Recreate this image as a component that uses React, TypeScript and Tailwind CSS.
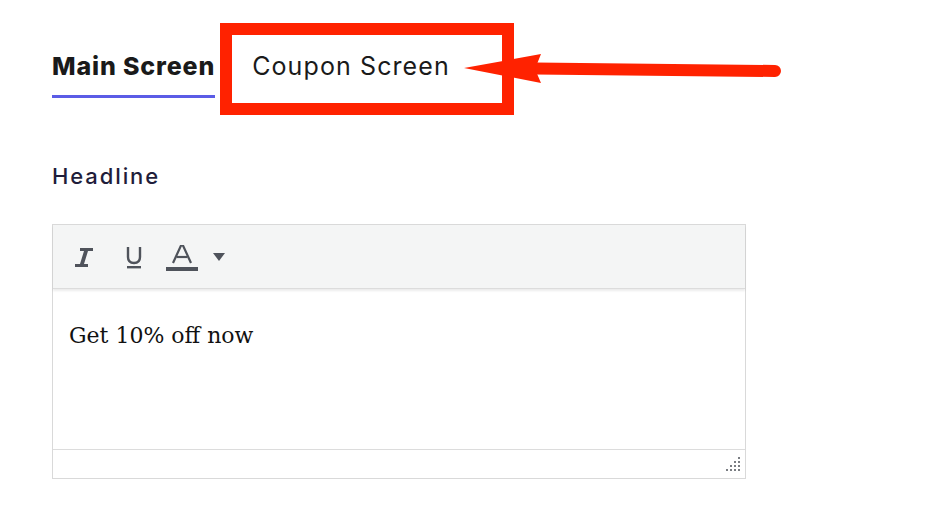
import React from 'react';

// toolbar glyphs drawn to match the editor's icon set
const ItalicIcon = () => (
  <svg width="20" height="22" viewBox="0 0 20 22" className="block">
    <path d="M5 1h13v3h-5l-4 13h4v3H0v-3h5l4-13H5z" fill="#4f535b" />
  </svg>
);

const UnderlineIcon = () => (
  <svg width="18" height="24" viewBox="0 0 18 24" className="block">
    <path d="M3 1v10c0 4 2.5 6 6 6s6-2 6-6V1" fill="none" stroke="#4f535b" strokeWidth="2.4" />
    <rect x="2" y="20" width="14" height="2.4" fill="#4f535b" />
  </svg>
);

const ColorIcon = () => (
  <svg width="32" height="26" viewBox="0 0 32 26" className="block">
    <path d="M7 18L15 0.5h2L25 18" fill="none" stroke="#4f535b" strokeWidth="2.2" />
    <path d="M10.5 12h11" stroke="#4f535b" strokeWidth="2.2" />
    <rect x="0" y="22" width="32" height="4" fill="#4f535b" />
  </svg>
);

const Caret = () => (
  <svg width="12" height="9" viewBox="0 0 12 9" className="block">
    <path d="M0 0h12L6 8z" fill="#4f535b" />
  </svg>
);

const ResizeGrip = () => {
  const dots: [number, number][] = [];
  for (let r = 0; r < 4; r++) {
    for (let c = 3 - r; c < 4; c++) dots.push([c * 4, r * 4]);
  }
  return (
    <svg width="15" height="15" viewBox="0 0 15 15" className="block">
      {dots.map(([x, y]) => (
        <rect key={`${x}-${y}`} x={x} y={y} width="2" height="2" fill="#7a7d82" />
      ))}
    </svg>
  );
};

export default function App() {
  return (
    <div className="relative w-[938px] h-[526px] bg-white overflow-hidden pl-[52px] pt-[50px] font-['Inter',sans-serif]">
      {/* tabs */}
      <div className="flex items-start gap-[37px]">
        <div className="border-b-[3px] border-[#5b5ce6] pb-[13px]">
          <span className="block whitespace-nowrap text-[25px] leading-8 font-extrabold tracking-[0.85px] text-[#1a1a1a]">Main Screen</span>
        </div>
        <span className="block whitespace-nowrap text-[25px] leading-8 font-normal tracking-[1.1px] text-[#1a1a1a]">Coupon Screen</span>
      </div>

      {/* headline label */}
      <h3 className="mt-[64px] text-[22px] leading-7 font-medium tracking-[1.9px] text-[#1f1d3a]">Headline</h3>

      {/* editor */}
      <div className="mt-[34px] w-[694px] h-[255px] border border-[#d9d9d9] flex flex-col">
        <div className="h-[64px] bg-[#f4f5f5] border-b border-[#dcdcdc] shadow-[0_2px_2px_rgba(0,0,0,0.08)] flex items-center pl-[22px] relative z-10">
          <div className="pt-[2px]"><ItalicIcon /></div>
          <div className="ml-[30px] pt-[2px]"><UnderlineIcon /></div>
          <div className="ml-[23px] pt-[2px]"><ColorIcon /></div>
          <div className="ml-[15px] pt-[2px]"><Caret /></div>
        </div>
        <div className="flex-1 px-[16px] pt-[33px] font-['DejaVu_Serif',serif] text-[22px] leading-7 text-[#111]">
          Get 10% off now
        </div>
        <div className="h-[29px] border-t border-[#dcdcdc] flex items-center justify-end pr-[4px]">
          <ResizeGrip />
        </div>
      </div>

      {/* annotation: red box + arrow */}
      <div className="absolute left-[220px] top-[23px] w-[294px] h-[92px] border-[12px] border-[#ff2200]" />
      <svg className="absolute left-0 top-0 pointer-events-none" width="938" height="526">
        <path d="M535 68.5L775 71" stroke="#ff2200" strokeWidth="12" strokeLinecap="round" />
        <path d="M464 68L541 54L535 69L541 83Z" fill="#ff2200" />
      </svg>
    </div>
  );
}
